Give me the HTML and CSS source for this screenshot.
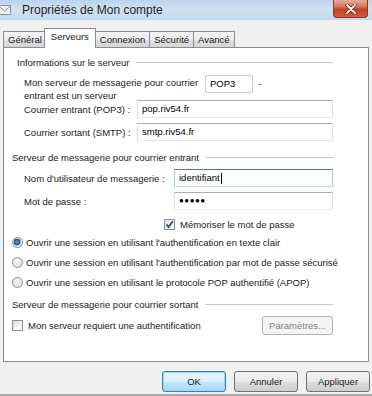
FILE: index.html
```html
<!DOCTYPE html>
<html lang="fr">
<head>
    <meta charset="UTF-8">
    <meta name="viewport" content="width=device-width, initial-scale=1.0">
    <title>Propriétés de Mon compte</title>
    <link rel="stylesheet" href="styles.css">
</head>
<body>
    <div class="window">
        <header class="titlebar">
            <svg class="app-icon" width="14" height="12" viewBox="0 0 14 12">
                <rect x="0.5" y="1.5" width="12" height="9" fill="#eef0f2" stroke="#8d949c"/>
                <path d="M0.5 2 L6.5 7 L12.5 2" fill="none" stroke="#8d949c"/>
            </svg>
            <span class="title">Propriétés de Mon compte</span>
            <div class="close-btn">
                <svg width="12" height="10" viewBox="0 0 12 10">
                    <path d="M2 1 L10 9 M10 1 L2 9" stroke="#6a2214" stroke-width="3.4" stroke-linecap="round"/>
                    <path d="M2 1 L10 9 M10 1 L2 9" stroke="#ffffff" stroke-width="1.8" stroke-linecap="round"/>
                </svg>
            </div>
        </header>

        <nav class="tabs">
            <div class="tab">Général</div>
            <div class="tab active">Serveurs</div>
            <div class="tab">Connexion</div>
            <div class="tab">Sécurité</div>
            <div class="tab">Avancé</div>
        </nav>

        <main class="panel">
            <div class="group-title first">Informations sur le serveur</div>

            <div class="row server-type">
                <div class="label two-lines">Mon serveur de messagerie pour courrier<br>entrant est un serveur</div>
                <div class="field small">POP3</div>
                <span class="dash">-</span>
            </div>
            <div class="row row-entrant">
                <div class="label label-server">Courrier entrant (POP3) :</div>
                <div class="field wide">pop.riv54.fr</div>
            </div>
            <div class="row row-sortant">
                <div class="label label-server">Courrier sortant (SMTP) :</div>
                <div class="field wide">smtp.riv54.fr</div>
            </div>

            <div class="group-title">Serveur de messagerie pour courrier entrant</div>

            <div class="row row-user">
                <div class="label label-account">Nom d'utilisateur de messagerie :</div>
                <div class="field account focused">identifiant<span class="caret"></span></div>
            </div>
            <div class="row row-pass">
                <div class="label label-account">Mot de passe :</div>
                <div class="field account"><span class="dots">●●●●●</span></div>
            </div>
            <div class="option remember">
                <span class="checkbox checked">
                    <svg width="9" height="9" viewBox="0 0 9 9"><path d="M1.5 4.5 L3.6 7 L7.8 1.2" fill="none" stroke="#2b4a8a" stroke-width="1.7"/></svg>
                </span>
                Mémoriser le mot de passe
            </div>

            <div class="option radio-row first-radio">
                <span class="radio selected"></span>
                Ouvrir une session en utilisant l'authentification en texte clair
            </div>
            <div class="option radio-row">
                <span class="radio"></span>
                Ouvrir une session en utilisant l'authentification par mot de passe sécurisé
            </div>
            <div class="option radio-row">
                <span class="radio"></span>
                Ouvrir une session en utilisant le protocole POP authentifié (APOP)
            </div>

            <div class="group-title outgoing">Serveur de messagerie pour courrier sortant</div>

            <div class="option auth-row">
                <span class="checkbox"></span>
                Mon serveur requiert une authentification
                <button class="btn disabled">Paramètres...</button>
            </div>
        </main>

        <footer class="buttons">
            <button class="btn default">OK</button>
            <button class="btn">Annuler</button>
            <button class="btn">Appliquer</button>
        </footer>
    </div>
</body>
</html>
```

FILE: styles.css
```css
/* Fenêtre de dialogue */
body {
    margin: 0;
    font-family: 'Liberation Sans', Arial, sans-serif;
    font-size: 9.5px;
    color: #1a1a1a;
    background: #f0f0f0;
}

.window {
    width: 372px;
    height: 396px;
    overflow: hidden;
    background: #f0f0f0;
    box-sizing: border-box;
    border-bottom: 2px solid #a7a7a7;
}

.titlebar {
    height: 20px;
    display: flex;
    align-items: center;
    background: linear-gradient(180deg, #bcd3ec 0%, #d0e1f3 45%, #c4d9ef 100%);
    border-bottom: 1px solid #e8eef5;
}

.app-icon {
    margin-left: -2px;
}

.title {
    margin-left: 10px;
    font-size: 12px;
    color: #1e1e1e;
}

.close-btn {
    margin-left: auto;
    margin-right: 4px;
    align-self: flex-start;
    width: 35px;
    height: 18px;
    box-sizing: border-box;
    border: 1px solid #8a3526;
    border-top: none;
    border-radius: 0 0 4px 4px;
    background: linear-gradient(180deg, #e8a898 0%, #d77660 40%, #c2401f 55%, #d45c3c 100%);
    display: flex;
    align-items: center;
    justify-content: center;
}

/* Onglets */
.tabs {
    display: flex;
    align-items: flex-end;
    height: 19px;
    margin-top: 7px;
    padding-left: 3px;
}

.tab {
    height: 16px;
    line-height: 15px;
    padding: 0 4px;
    box-sizing: border-box;
    border: 1px solid #898c95;
    border-bottom: none;
    margin-right: -1px;
    background: linear-gradient(180deg, #f3f3f3 0%, #ebebeb 50%, #dedede 51%, #d6d6d6 100%);
}

.tab.active {
    position: relative;
    z-index: 1;
    height: 20px;
    line-height: 16px;
    margin: 0 -2px -1px -2px;
    padding: 0 6px;
    background: #ffffff;
}

.tab.active + .tab {
    margin-left: 1px;
}

.panel {
    width: 366px;
    height: 315px;
    margin-left: 3px;
    box-sizing: border-box;
    border: 1px solid #898c95;
    background: #ffffff;
    display: flex;
    flex-direction: column;
}

/* Titres de groupe avec trait */
.group-title {
    display: flex;
    align-items: center;
    height: 14px;
    margin: 9px 35px 0 8px;
    white-space: nowrap;
}

.group-title::after {
    content: "";
    flex: 1;
    height: 1px;
    margin-left: 7px;
    background: #c3c7cb;
    box-shadow: 0 1px 0 #ffffff;
}

.group-title.first {
    margin-top: 7px;
    margin-left: 13px;
}

.group-title.outgoing {
    margin-top: 8px;
}

.row {
    display: flex;
    align-items: center;
    margin-left: 20px;
}

.label {
    white-space: nowrap;
}

.server-type {
    height: 24px;
    margin-top: 6px;
    align-items: flex-start;
}

.two-lines {
    width: 181px;
    line-height: 13px;
    padding-top: 1px;
}

.label-server {
    width: 113px;
}

.label-account {
    width: 150px;
}

.row-entrant {
    margin-top: 1px;
}

.row-sortant {
    margin-top: 5px;
}

.row-user {
    margin-top: 5px;
}

.row-pass {
    margin-top: 5px;
}

.field {
    height: 18px;
    box-sizing: border-box;
    padding-left: 4px;
    line-height: 16px;
    color: #000;
    border: 1px solid #dbdfe6;
    border-top-color: #abadb3;
    border-bottom-color: #e3e9ef;
    background: #ffffff;
    display: flex;
    align-items: center;
}

.field.small {
    width: 48px;
    border-color: #c8cdd3;
    border-radius: 2px;
}

.field.wide {
    width: 196px;
}

.field.account {
    width: 159px;
}

.field.focused {
    border-color: #a4c9e3;
    border-top-color: #3d7bad;
    border-bottom-color: #b7d9ed;
}

.caret {
    width: 1px;
    height: 11px;
    margin-left: 1px;
    background: #000;
}

.dots {
    font-size: 8px;
    letter-spacing: 0.5px;
}

.dash {
    margin-left: 5px;
    line-height: 18px;
}

/* Cases à cocher et boutons radio */
.option {
    display: flex;
    align-items: center;
    height: 14px;
    white-space: nowrap;
}

.remember {
    margin: 7px 0 0 160px;
    gap: 5px;
}

.radio-row {
    margin: 6px 0 0 8px;
    gap: 3px;
}

.radio-row.first-radio {
    margin-top: 4px;
}

.checkbox {
    width: 11px;
    height: 11px;
    box-sizing: border-box;
    border: 1px solid #8e8f8f;
    background: linear-gradient(135deg, #dcdcdc 0%, #f4f4f4 60%, #ffffff 100%);
    display: flex;
    align-items: center;
    justify-content: center;
}

.radio {
    width: 11px;
    height: 11px;
    box-sizing: border-box;
    border: 1px solid #8e8f8f;
    border-radius: 50%;
    background: radial-gradient(circle at 40% 40%, #f4f4f4 0%, #dcdcdc 100%);
}

.radio.selected {
    background: radial-gradient(circle at 45% 45%, #5aa4d8 0%, #1e4e86 45%, #dcdcdc 52%, #f0f0f0 100%);
}

.auth-row {
    height: 20px;
    margin: 4px 35px 0 8px;
    gap: 5px;
}

/* Boutons */
.btn {
    width: 64px;
    height: 21px;
    padding: 0;
    font-family: inherit;
    font-size: 9.5px;
    color: #1a1a1a;
    border: 1px solid #707070;
    border-radius: 3px;
    background: linear-gradient(180deg, #f2f2f2 0%, #ebebeb 50%, #dddddd 51%, #cfcfcf 100%);
}

.btn.default {
    border-color: #3c7fb1;
    box-shadow: inset 0 0 0 1px #9fd4f0;
    background: linear-gradient(180deg, #eaf6fd 0%, #d9f0fc 50%, #bee6fd 51%, #a7d9f5 100%);
}

.btn.disabled {
    width: 71px;
    height: 19px;
    margin-left: auto;
    color: #838383;
    border-color: #adb2b5;
    background: #f4f4f4;
}

.buttons {
    display: flex;
    justify-content: flex-end;
    gap: 8px;
    margin-top: 9px;
    padding-right: 2px;
}
```
